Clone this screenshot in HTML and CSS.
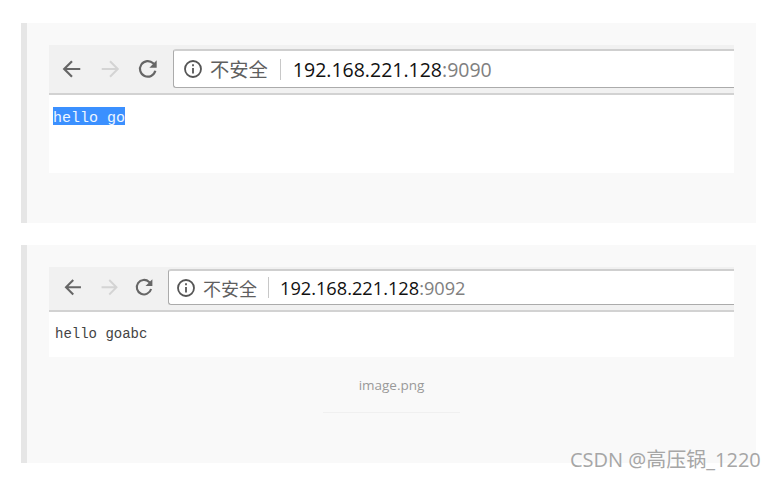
FILE: index.html
```html
<!DOCTYPE html>
<html lang="en">
<head>
    <meta charset="UTF-8">
    <meta name="viewport" content="width=device-width, initial-scale=1.0">
    <title>hello go</title>
    <link rel="stylesheet" href="styles.css">
</head>
<body>
    <div class="panel panel-first">
        <div class="browser">
            <div class="toolbar">
                <div class="nav-buttons">
                    <svg class="icon" viewBox="0 0 24 24"><path class="stroke-dark" d="M21 12H4M12 3.500 3.500 12l8.500 8.500"/></svg>
                    <svg class="icon" viewBox="0 0 24 24"><path class="stroke-light" d="M3 12h17M12 3.500l8.500 8.500-8.500 8.500"/></svg>
                    <svg class="icon" viewBox="0 0 24 24"><path class="stroke-dark" d="M20 14a8.500 8.500 0 1 1-2.300-8.200L20 8"/><path class="fill-dark" d="M21.500 2.500v8h-8z"/></svg>
                </div>
                <div class="address">
                    <svg class="info" viewBox="0 0 20 20"><circle cx="10" cy="10" r="8"/><path d="M10 9v5.500M10 5.300v2"/></svg>
                    <span class="insecure">不安全</span>
                    <span class="divider"></span>
                    <span class="url">192.168.221.128<span class="port">:9090</span></span>
                </div>
            </div>
            <div class="page-body">
                <span class="selected">hello go</span>
            </div>
        </div>
    </div>

    <div class="panel panel-second">
        <div class="browser">
            <div class="toolbar">
                <div class="nav-buttons">
                    <svg class="icon" viewBox="0 0 24 24"><path class="stroke-dark" d="M21 12H4M12 3.500 3.500 12l8.500 8.500"/></svg>
                    <svg class="icon" viewBox="0 0 24 24"><path class="stroke-light" d="M3 12h17M12 3.500l8.500 8.500-8.500 8.500"/></svg>
                    <svg class="icon" viewBox="0 0 24 24"><path class="stroke-dark" d="M20 14a8.500 8.500 0 1 1-2.300-8.200L20 8"/><path class="fill-dark" d="M21.500 2.500v8h-8z"/></svg>
                </div>
                <div class="address">
                    <svg class="info" viewBox="0 0 20 20"><circle cx="10" cy="10" r="8"/><path d="M10 9v5.500M10 5.300v2"/></svg>
                    <span class="insecure">不安全</span>
                    <span class="divider"></span>
                    <span class="url">192.168.221.128<span class="port">:9092</span></span>
                </div>
            </div>
            <div class="page-body">hello goabc</div>
        </div>
        <div class="caption">image.png</div>
    </div>

    <div class="watermark">CSDN @高压锅_1220</div>
</body>
</html>
```

FILE: styles.css
```css
* {
    margin: 0;
    padding: 0;
    box-sizing: border-box;
}

body {
    background-color: white;
    min-height: 100vh;
    padding: 23px 0 0 21px;
    font-family: "Open Sans", "Noto Sans CJK SC", sans-serif;
    overflow: hidden;
}

.panel {
    width: 735px;
    background-color: #f9f9f9;
    border-left: 6px solid #e6e6e6;
    padding: 22px 22px 0;
}

.panel-first {
    height: 200px;
    margin-bottom: 22px;
}

.panel-second {
    height: 218px;
}

.browser {
    background-color: white;
}

.toolbar {
    display: flex;
    background-color: #f1f1f1;
    border-bottom: 2px solid #d2d2d2;
}

.panel-first .toolbar {
    height: 50px;
    padding-top: 4px;
}

.panel-second .toolbar {
    height: 45px;
    padding-top: 2px;
}

.nav-buttons {
    display: flex;
    align-items: center;
    width: 124px;
    padding-left: 12px;
    gap: 16px;
    height: 39px;
}

.panel-second .nav-buttons {
    width: 119px;
    padding-left: 14px;
    gap: 15px;
    height: 36px;
}

.icon {
    width: 22px;
    height: 22px;
    flex-shrink: 0;
}

.panel-second .icon {
    width: 20.500px;
    height: 20.500px;
}

.stroke-dark {
    fill: none;
    stroke: #666;
    stroke-width: 2.400;
}

.stroke-light {
    fill: none;
    stroke: #d4d4d4;
    stroke-width: 2.200;
}

.fill-dark {
    fill: #666;
}

.address {
    flex: 1;
    display: flex;
    align-items: center;
    background-color: white;
    border: 1px solid #ababab;
    border-top: 2px solid #cfcfcf;
    border-right: none;
    border-radius: 3px 0 0 3px;
    height: 39px;
    padding-left: 9px;
}

.panel-second .address {
    height: 36px;
    padding-left: 7px;
}

.info {
    width: 20px;
    height: 20px;
    fill: none;
    stroke: #555;
    stroke-width: 1.800;
    margin-right: 7px;
}

.insecure {
    font-size: 19.300px;
    color: #5f5f5f;
}

.panel-second .insecure {
    font-size: 18px;
}

.divider {
    width: 1px;
    height: 21px;
    background-color: #c8c8c8;
    margin: 0 12px;
}

.panel-second .divider {
    margin: 0 11px;
}

.url {
    font-size: 19.500px;
    color: #111;
}

.panel-second .url {
    font-size: 18.200px;
}

.port {
    color: #808080;
}

.panel-first .browser {
    height: 128px;
}

.panel-second .browser {
    height: 90px;
}

.page-body {
    font-family: "Liberation Mono", monospace;
    font-size: 14px;
    line-height: 20px;
    color: #444;
    padding: 12px 6px 8px;
}

.panel-first .page-body {
    font-size: 15px;
    padding: 12px 4px;
}

.selected {
    display: inline-block;
    background-color: #3b90ff;
    color: #eef6ff;
    line-height: 14px;
    padding-top: 5px;
    height: 18px;
}

.caption {
    width: 137px;
    margin: 19px 0 0 274px;
    padding-bottom: 18px;
    border-bottom: 1px solid #f0f0f0;
    text-align: center;
    font-size: 13.500px;
    line-height: 18px;
    color: #999;
}

.watermark {
    position: absolute;
    left: 570px;
    top: 448px;
    font-size: 20px;
    line-height: 24px;
    color: #a6a6a6;
    white-space: nowrap;
}
```
